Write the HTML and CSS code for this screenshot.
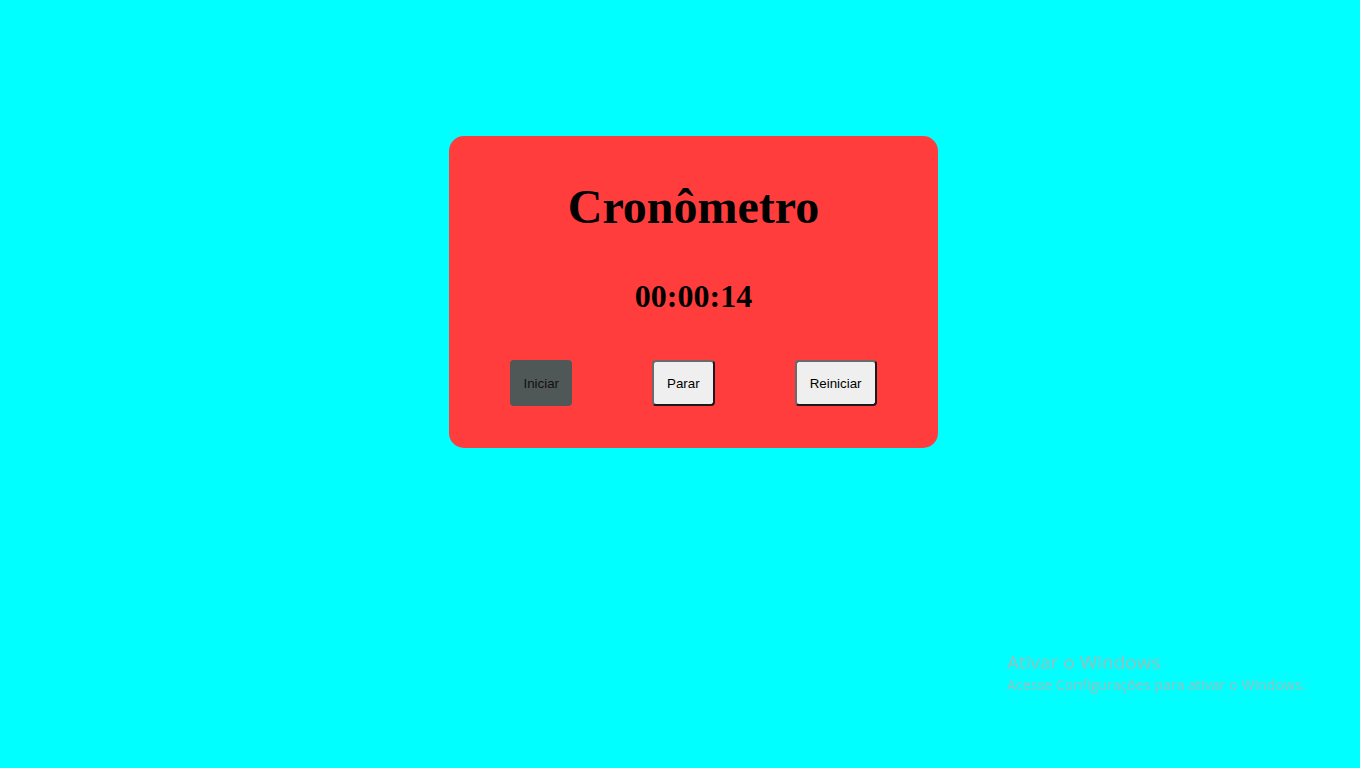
FILE: index.html
```html
<!DOCTYPE html>
<html lang="pt-BR">
<head>
<meta charset="utf-8">
<title>Cronômetro</title>
<link rel="stylesheet" href="styles.css">
</head>
<body>
  <main class="page">
    <section class="card">
      <h1 class="title">Cronômetro</h1>
      <div class="timer">00:00:14</div>
      <div class="controls">
        <button class="btn btn-active">Iniciar</button>
        <button class="btn">Parar</button>
        <button class="btn">Reiniciar</button>
      </div>
    </section>
  </main>
  <div class="watermark">
    <div class="wm-title">Ativar o Windows</div>
    <div class="wm-sub">Acesse Configurações para ativar o Windows.</div>
  </div>
</body>
</html>
```
FILE: styles.css
```css
html, body {
  margin: 0;
  padding: 0;
}

body {
  background: #00ffff;
  width: 1360px;
  height: 768px;
  overflow: hidden;
  font-family: "Liberation Serif", "Times New Roman", serif;
}

.page {
  display: flex;
  justify-content: center;
  padding: 136px 0 0 27px;
}

.card {
  width: 489px;
  height: 312px;
  box-sizing: border-box;
  background: #ff3d3d;
  border-radius: 15px;
  padding-top: 43px;
  display: flex;
  flex-direction: column;
  align-items: center;
}

.title {
  margin: 0;
  font-size: 48px;
  font-weight: bold;
  line-height: 55px;
  color: #000;
}

.timer {
  margin-top: 44px;
  font-size: 32px;
  font-weight: bold;
  line-height: 37px;
  color: #000;
}

.controls {
  margin-top: 45px;
  display: flex;
  justify-content: center;
  gap: 80px;
}

.btn {
  height: 46px;
  padding: 0 13px;
  font-family: "Liberation Sans", Arial, sans-serif;
  font-size: 13.33px;
  color: #000;
  background: #efefef;
  border: 2px solid;
  border-color: #6a6a6a #1a1a1a #1a1a1a #6a6a6a;
  border-radius: 4px;
}

.btn-active {
  background: #4f5757;
  border: none;
  border-radius: 4px;
  color: #111;
}

.watermark {
  position: fixed;
  left: 1007px;
  top: 649px;
  font-family: "Open Sans", "Noto Sans", sans-serif;
  color: #9fbaba;
}

.wm-title {
  font-size: 19px;
  line-height: 26px;
}

.wm-sub {
  font-size: 14.2px;
  line-height: 20px;
}
```
